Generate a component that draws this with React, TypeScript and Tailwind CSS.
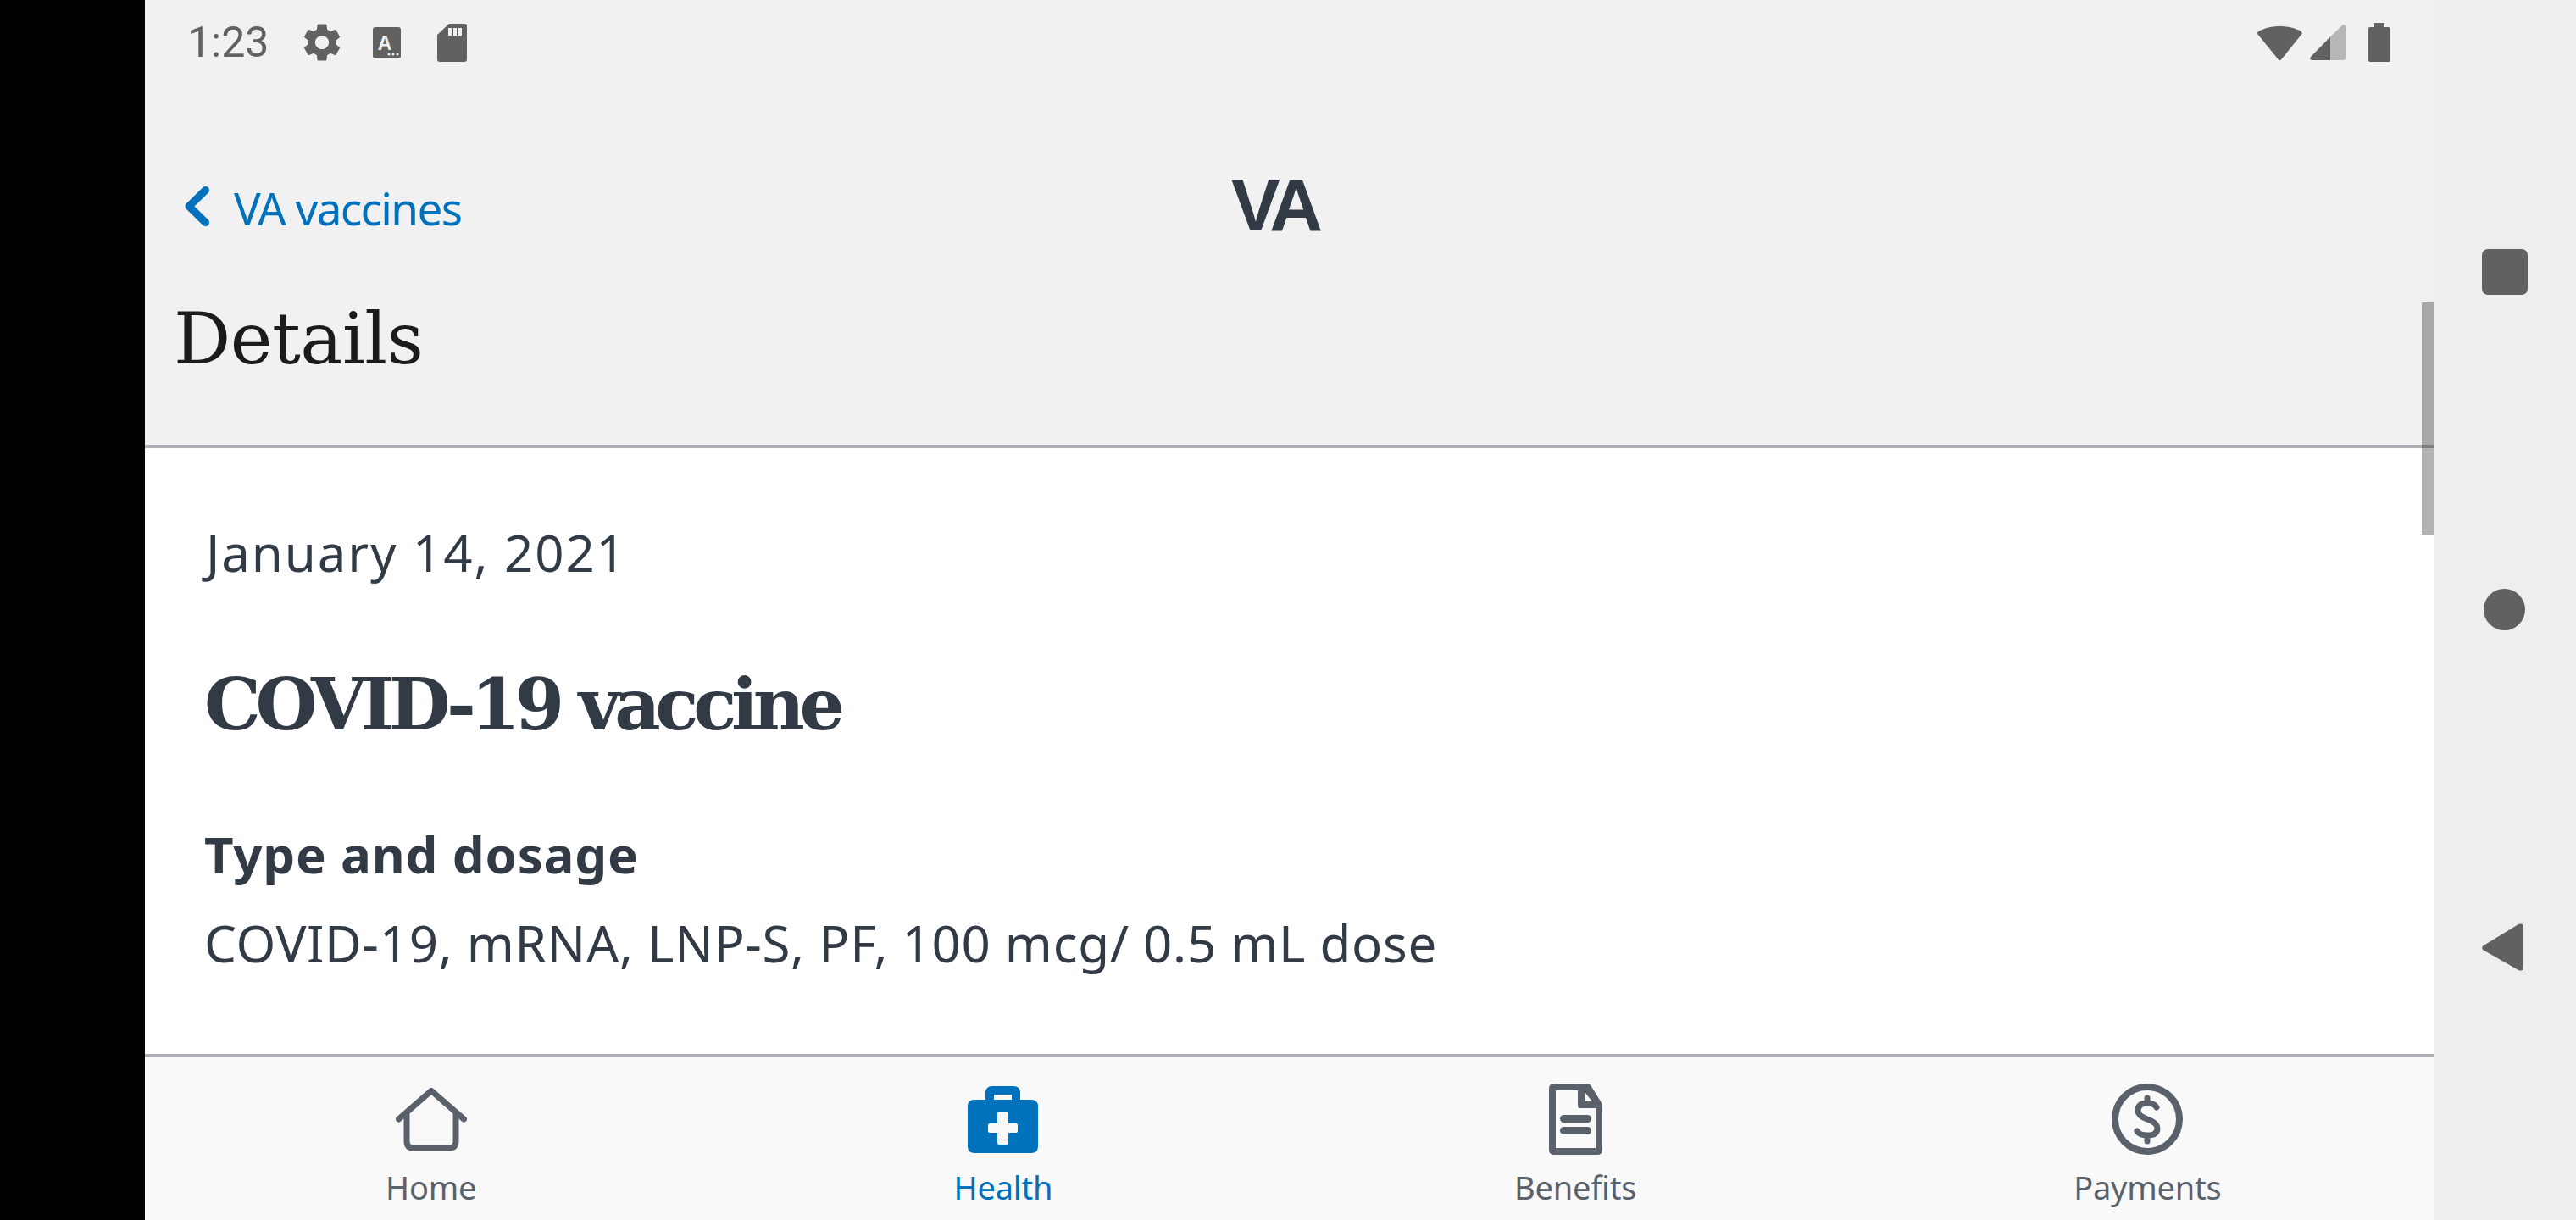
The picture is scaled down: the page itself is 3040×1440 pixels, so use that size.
import { MdSettings } from "react-icons/md";

const sans = "font-['Noto_Sans','Open_Sans',sans-serif]";

function StatusBar() {
  return (
    <div className="flex h-[100px] items-center pl-[50px] pr-[51px] text-[#616161]">
      <span className="w-[94px] font-['Roboto',sans-serif] text-[50px] leading-[100px] -mt-[1px]">1:23</span>
      <MdSettings className="ml-[38px] h-[54px] w-[54px] -mt-[1px]" />
      <svg className="ml-[33px] h-[37px] w-[33px]" viewBox="0 0 33 37">
        <rect width="33" height="37" rx="3" fill="#616161" />
        <text x="14" y="27" textAnchor="middle" fontSize="23" fontWeight="700" fontFamily="Liberation Sans" fill="#f1f1f1">A</text>
        <circle cx="19" cy="32" r="1.5" fill="#f1f1f1" />
        <circle cx="24" cy="32" r="1.5" fill="#f1f1f1" />
        <circle cx="29" cy="32" r="1.5" fill="#f1f1f1" />
      </svg>
      <svg className="ml-[43px] h-[45px] w-[35px]" viewBox="0 0 35 45">
        <path fill="#616161" fillRule="evenodd" d="M14 0h18a3 3 0 0 1 3 3v39a3 3 0 0 1-3 3H3a3 3 0 0 1-3-3V13zM13 5v9h4V5zm6 0v9h4V5zm6 0v9h4V5z" />
      </svg>
      <div className="flex-1" />
      <svg className="h-[43px] w-[53px]" viewBox="0 0 53 43">
        <path fill="#616161" d="M0 10Q0 9 1.500 8C15 0 38 0 51.500 8Q53 9 52.500 11L28 41.500Q26.500 43 25 41.500L.5 11.500Z" />
      </svg>
      <svg className="ml-[9px] h-[42px] w-[42px]" viewBox="0 0 42 42">
        <path fill="#b7b7b7" d="M38.500.5Q42 -1 42 3v36q0 3-3 3H24V14.500z" />
        <path fill="#616161" d="M24 14.500V42H2Q-1 41 1 38z" />
      </svg>
      <svg className="ml-[27px] h-[46px] w-[26px]" viewBox="0 0 26 46">
        <path fill="#616161" d="M7 0h12v5h5q2 0 2 2v37q0 2-2 2H2q-2 0-2-2V7q0-2 2-2h5z" />
      </svg>
    </div>
  );
}

function HomeIcon() {
  return (
    <svg className="h-[75px] w-[84px]" viewBox="0 0 84 75" fill="none" stroke="#5b616b" strokeWidth="7">
      <path strokeLinecap="round" strokeLinejoin="round" d="M3.500 37 42 3.500 80.500 37" />
      <path d="M13 30v33q0 8 8 8h42q8 0 8-8V30" />
    </svg>
  );
}

function HealthIcon() {
  return (
    <svg className="h-[79px] w-[83px]" viewBox="0 0 83 79">
      <path fill="#0071bb" fillRule="evenodd" d="M21 16V8q0-8 8-8h25q8 0 8 8v8h13q8 0 8 8v47q0 8-8 8H8q-8 0-8-8V24q0-8 8-8zm10-6v6h21v-6zM35 32v12H26a2 2 0 0 0-2 2v7a2 2 0 0 0 2 2h9v12a2 2 0 0 0 2 2h9a2 2 0 0 0 2-2V55h9a2 2 0 0 0 2-2v-7a2 2 0 0 0-2-2h-9V32a2 2 0 0 0-2-2h-9a2 2 0 0 0-2 2z" />
    </svg>
  );
}

function BenefitsIcon() {
  return (
    <svg className="h-[84px] w-[63px]" viewBox="0 0 63 84">
      <path fill="#5b616b" fillRule="evenodd" d="M6 0h39q3 0 4.500 2.500L61 21q2 3 2 6v51q0 6-6 6H6q-6 0-6-6V6q0-6 6-6zm2 8v68h47V29H37q-3 0-3-3V8zm34 2v11h9z" />
      <rect x="13" y="37" width="37" height="9" rx="4.500" fill="#5b616b" />
      <rect x="13" y="51" width="37" height="9" rx="4.500" fill="#5b616b" />
    </svg>
  );
}

function PaymentsIcon() {
  return (
    <svg className="h-[84px] w-[84px]" viewBox="0 0 84 84" fill="none" stroke="#5b616b">
      <circle cx="42" cy="42" r="38" strokeWidth="8" />
      <path strokeWidth="7" strokeLinecap="round" d="M53 28q-3-5-11-5-11 0-11 9 0 6 11 10 12 4 12 11 0 8-12 8-9 0-12-5M42 17v6M42 61v7" />
    </svg>
  );
}

const tabs = [
  { label: "Home", icon: <HomeIcon />, color: "text-[#5b616b]" },
  { label: "Health", icon: <HealthIcon />, color: "text-[#0071bb]" },
  { label: "Benefits", icon: <BenefitsIcon />, color: "text-[#5b616b]" },
  { label: "Payments", icon: <PaymentsIcon />, color: "text-[#5b616b]" },
];

export default function App() {
  return (
    <div className={`flex h-[1440px] w-[3040px] overflow-hidden bg-black ${sans}`}>
      <div className="w-[171px] shrink-0 bg-black" />
      <main className="relative flex w-[2701px] shrink-0 flex-col bg-[#f1f1f1]">
        <StatusBar />
        <div className="relative flex h-[192px] items-center justify-center pr-[35px] pt-[92px]">
          <div className="absolute left-[47px] top-[93px] flex h-[100px] items-center">
            <svg className="h-[47px] w-[29px]" viewBox="0 0 29 47" fill="none" stroke="#0071bb" strokeWidth="9" strokeLinecap="round" strokeLinejoin="round">
              <path d="M24.500 4.500 5 23.500l19.500 19" />
            </svg>
            <span className="ml-[29px] text-[53px] tracking-[-1.650px] text-[#0071bb] mt-[6px]">VA vaccines</span>
          </div>
          <span className="font-['Liberation_Sans',sans-serif] text-[87px] font-bold leading-[100px] tracking-[-6px] text-[#323a45]">VA</span>
        </div>
        <div className="h-[233px] pl-[34px] pt-[53px]">
          <h1 className="font-['DejaVu_Serif',serif] text-[84px] leading-[110px] tracking-[-0.500px] text-[#1b1b1b]">Details</h1>
        </div>
        <div className="min-h-0 flex-1 overflow-hidden border-t-4 border-[#aeb0b5] bg-white pl-[72px] pr-[72px] text-[#323a45]">
          <p className="mt-[88px] text-[60px] leading-[70px] tracking-[1.900px]">January 14, 2021</p>
          <h2 className="mt-[95px] -ml-[2px] font-['DejaVu_Serif',serif] text-[84px] font-bold leading-[100px] tracking-[-6.300px]">COVID-19 vaccine</h2>
          <p className="mt-[91px] -ml-[2px] text-[60px] font-bold leading-[70px] tracking-[0.800px]">Type and dosage</p>
          <p className="mt-[35px] -ml-[2px] text-[60px] leading-[70px] tracking-[0.700px]">COVID-19, mRNA, LNP-S, PF, 100 mcg/ 0.5 mL dose</p>
        </div>
        <nav className="grid h-[196px] grid-cols-4 border-t-4 border-[#aeb0b5] bg-[#f9f9f9]">
          {tabs.map((tab) => (
            <div key={tab.label} className="flex flex-col items-center pt-[31px]">
              <div className="flex h-[84px] items-center justify-center">{tab.icon}</div>
              <span className={`mt-[13px] text-[38px] leading-[50px] tracking-[-0.200px] ${tab.color}`}>{tab.label}</span>
            </div>
          ))}
        </nav>
        <div className="absolute right-0 top-[357px] h-[274px] w-[14px] bg-black/30" />
      </main>
      <aside className="flex w-[168px] shrink-0 flex-col items-center bg-[#eeeeee]">
        <div className="mt-[294px] h-[54px] w-[54px] rounded-[7px] bg-[#616161]" />
        <div className="mr-[2px] mt-[347px] h-[49px] w-[49px] rounded-full bg-[#616161]" />
        <svg className="mr-[6px] mt-[346px] h-[56px] w-[49px]" viewBox="0 0 49 56">
          <path fill="#616161" d="M1 31q-2-3 1-5L43 1q6-2 6 3v48q0 5-6 3z" />
        </svg>
      </aside>
    </div>
  );
}
